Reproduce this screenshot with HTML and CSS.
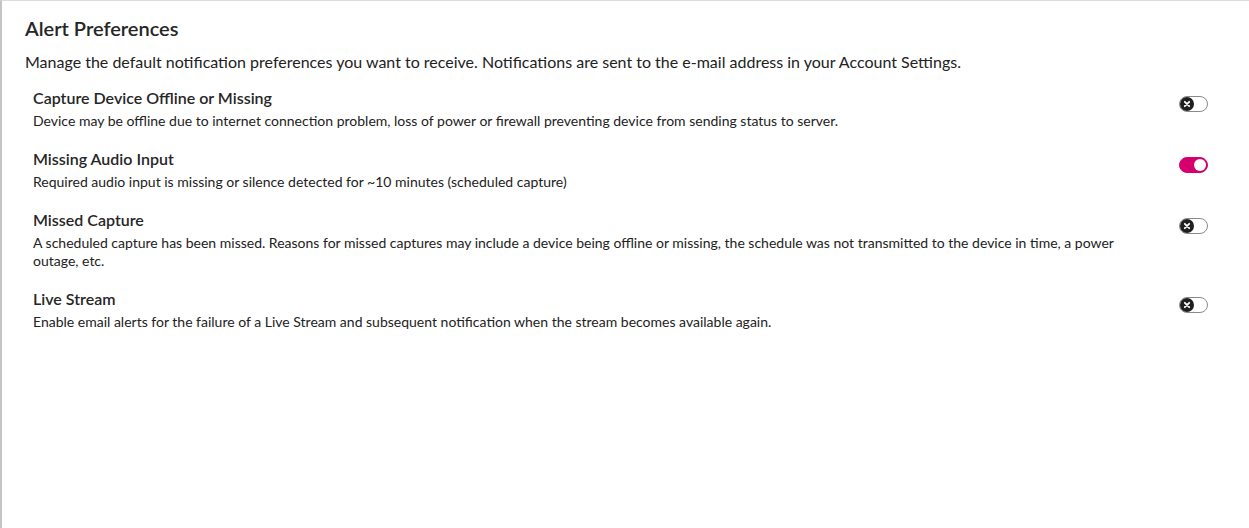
FILE: index.html
```html
<!DOCTYPE html>
<html lang="en">
<head>
  <meta charset="UTF-8" />
  <title>Alert Preferences</title>
  <link rel="stylesheet" href="styles.css">
</head>
<body>
  <div class="panel">
    <h1 class="panel-title">Alert Preferences</h1>
    <p class="intro">Manage the default notification preferences you want to receive. Notifications are sent to the e-mail address in your Account Settings.</p>

    <div class="pref-list">
      <div class="pref-row">
        <div class="pref-text">
          <div class="pref-name">Capture Device Offline or Missing</div>
          <div class="pref-desc">Device may be offline due to internet connection problem, loss of power or firewall preventing device from sending status to server.</div>
        </div>
        <span class="toggle">
          <span class="knob"><svg viewBox="0 0 14 14" width="14" height="14"><circle cx="7" cy="7" r="7" fill="#1f1f1f"/><path d="M4.8 4.8 L9.2 9.2 M9.2 4.8 L4.8 9.2" stroke="#fff" stroke-width="1.8" stroke-linecap="round"/></svg></span>
        </span>
      </div>

      <div class="pref-row">
        <div class="pref-text">
          <div class="pref-name">Missing Audio Input</div>
          <div class="pref-desc">Required audio input is missing or silence detected for ~10 minutes (scheduled capture)</div>
        </div>
        <span class="toggle on">
          <span class="knob"></span>
        </span>
      </div>

      <div class="pref-row">
        <div class="pref-text">
          <div class="pref-name">Missed Capture</div>
          <div class="pref-desc">A scheduled capture has been missed. Reasons for missed captures may include a device being offline or missing, the schedule was not transmitted to the device in time, a power outage, etc.</div>
        </div>
        <span class="toggle">
          <span class="knob"><svg viewBox="0 0 14 14" width="14" height="14"><circle cx="7" cy="7" r="7" fill="#1f1f1f"/><path d="M4.8 4.8 L9.2 9.2 M9.2 4.8 L4.8 9.2" stroke="#fff" stroke-width="1.8" stroke-linecap="round"/></svg></span>
        </span>
      </div>

      <div class="pref-row">
        <div class="pref-text">
          <div class="pref-name">Live Stream</div>
          <div class="pref-desc">Enable email alerts for the failure of a Live Stream and subsequent notification when the stream becomes available again.</div>
        </div>
        <span class="toggle">
          <span class="knob"><svg viewBox="0 0 14 14" width="14" height="14"><circle cx="7" cy="7" r="7" fill="#1f1f1f"/><path d="M4.8 4.8 L9.2 9.2 M9.2 4.8 L4.8 9.2" stroke="#fff" stroke-width="1.8" stroke-linecap="round"/></svg></span>
        </span>
      </div>
    </div>
  </div>
</body>
</html>
```

FILE: styles.css
```css
body {
  font-family: 'Lato', 'Liberation Sans', sans-serif;
  background: #fff;
  color: #222;
  margin: 0;
  padding: 0;
}
.panel {
  min-height: 528px;
  box-sizing: border-box;
  border-left: 2px solid #c4c4c4;
  border-top: 1px solid #dcdcdc;
  padding: 14px 41px 0 23px;
}
.panel-title {
  font-size: 20px;
  font-weight: 600;
  color: #262626;
  margin: 0;
  line-height: 26px;
}
.intro {
  font-size: 16px;
  line-height: 20px;
  margin: 11px 0 0;
}
.pref-list {
  padding-left: 8px;
  margin-top: 15px;
}
.pref-row {
  display: flex;
  align-items: flex-start;
  justify-content: space-between;
  margin-bottom: 18px;
}
.pref-text {
  width: 1100px;
}
.pref-name {
  font-size: 16px;
  font-weight: 600;
  line-height: 22px;
  color: #262626;
}
.pref-desc {
  font-size: 14px;
  line-height: 18px;
  margin-top: 3px;
}
.toggle {
  position: relative;
  width: 29px;
  height: 16px;
  box-sizing: border-box;
  border: 1px solid #8a8a8a;
  border-radius: 8px;
  margin-top: 9px;
  background: #fff;
}
.toggle .knob {
  position: absolute;
  top: 0;
  left: 0;
  width: 14px;
  height: 14px;
  border-radius: 50%;
}
.toggle .knob svg { display: block; }
.toggle.on {
  background: #d5006d;
  border-color: #d5006d;
}
.toggle.on .knob {
  left: auto;
  right: 1px;
  top: 1px;
  width: 12px;
  height: 12px;
  background: #fff;
}
```
